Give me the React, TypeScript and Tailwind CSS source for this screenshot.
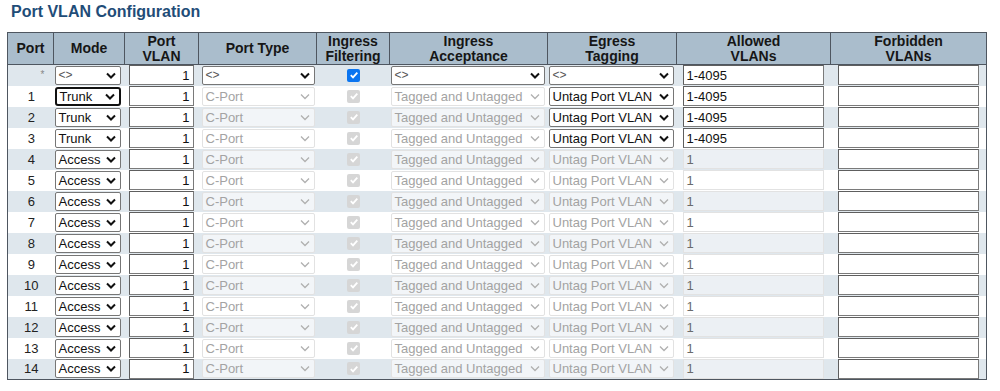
import React from "react";

type Row = {
  port: string;
  mode: string;
  star?: boolean;
};

const rows: Row[] = [
  { port: "*", mode: "<>", star: true },
  ...Array.from({ length: 14 }, (_, i) => ({
    port: String(i + 1),
    mode: i < 3 ? "Trunk" : "Access",
  })),
];

const Chevron = ({ disabled }: { disabled?: boolean }) => (
  <svg width="10" height="7" viewBox="0 0 10 7" className="shrink-0">
    <polyline
      points="1,1.5 5,5.5 9,1.5"
      fill="none"
      stroke={disabled ? "#b0b0b0" : "#111"}
      strokeWidth={disabled ? 1.3 : 2}
    />
  </svg>
);

const Sel = ({
  value,
  width,
  disabled,
  focused,
}: {
  value: string;
  width: string;
  disabled?: boolean;
  focused?: boolean;
}) => (
  <div
    className={`${width} h-[19px] flex items-center justify-between pl-[3px] pr-[4px] rounded-[2px] text-[13px] leading-none ${
      disabled
        ? "border border-[#e2e2e2] bg-white/60 text-[#a3a3a3]"
        : focused
        ? "border-2 border-[#111] rounded-[3px] bg-white text-[#111] pl-[2px] pr-[3px]"
        : "border border-[#767676] bg-white text-[#111]"
    }`}
  >
    <span className={value === "<>" ? "text-[#555] text-[12px]" : ""}>{value}</span>
    <Chevron disabled={disabled} />
  </div>
);

const Field = ({
  value,
  width,
  disabled,
  right,
}: {
  value: string;
  width: string;
  disabled?: boolean;
  right?: boolean;
}) => (
  <div
    className={`${width} h-[20px] flex items-center px-[3px] text-[13px] leading-none ${
      right ? "justify-end" : "justify-start"
    } ${
      disabled
        ? "border border-[#e2e2e2] bg-white/40 text-[#6b6b6b]"
        : "border border-[#7a7a7a] border-t-[#5e5e5e] border-l-[#5e5e5e] bg-white text-[#111]"
    }`}
  >
    {value}
  </div>
);

const Check = ({ disabled }: { disabled?: boolean }) => (
  <div
    className={`w-[13px] h-[13px] rounded-[2px] flex items-center justify-center ${
      disabled ? "bg-[#d6d6d6]" : "bg-[#0b75f0]"
    }`}
  >
    <svg width="10" height="10" viewBox="0 0 10 10">
      <polyline points="1.8,5.2 4,7.4 8.3,2.6" fill="none" stroke="#fff" strokeWidth="1.8" />
    </svg>
  </div>
);

const headers: [string, string?][] = [
  ["Port"],
  ["Mode"],
  ["Port", "VLAN"],
  ["Port Type"],
  ["Ingress", "Filtering"],
  ["Ingress", "Acceptance"],
  ["Egress", "Tagging"],
  ["Allowed", "VLANs"],
  ["Forbidden", "VLANs"],
];

const widths = ["w-[46px]", "w-[71px]", "w-[74px]", "w-[118px]", "w-[73px]", "w-[158px]", "w-[129px]", "w-[154px]", "w-[156px]"];

const App = () => {
  return (
    <main className="w-[1000px] h-[391px] bg-white pt-[3px] pl-[7px] font-['Liberation_Sans',Arial,sans-serif] text-[#111]">
      {/* Title */}
      <h1 className="ml-[4px] text-[16px] leading-[18px] font-bold text-[#1f4d78]">Port VLAN Configuration</h1>

      {/* Table */}
      <table className="mt-[11px] table-fixed border-collapse border border-[#4e5660] w-[980px]">
        <colgroup>
          {widths.map((w, i) => (
            <col key={i} className={w} />
          ))}
        </colgroup>
        <thead>
          <tr className="h-[32px] bg-[#aabdcc]">
            {headers.map(([a, b], i) => (
              <th key={i} className="border border-[#4e5660] p-0 text-[14px] leading-[15px] font-bold text-[#161616] text-center align-middle">
                {a}
                {b && <br />}
                {b}
              </th>
            ))}
          </tr>
        </thead>
        <tbody>
          {rows.map((r, idx) => {
            const n = Number(r.port);
            const egressOn = r.star || n <= 3;
            return (
              <tr key={r.port} className={`h-[21px] ${idx % 2 === 0 ? "bg-[#dfe7ed]" : "bg-white"}`}>
                {/* Port */}
                <td className="p-0 text-[13px] leading-none">
                  {r.star ? (
                    <div className="text-right pr-[9px] text-[#888] text-[10px]">*</div>
                  ) : (
                    <div className="text-center pl-[1px] text-[#222]">{r.port}</div>
                  )}
                </td>
                {/* Mode */}
                <td className="p-0">
                  <div className="pl-[1px] flex items-center">
                    <Sel value={r.mode} width="w-[66px]" focused={r.port === "1"} />
                  </div>
                </td>
                {/* Port VLAN */}
                <td className="p-0">
                  <div className="pl-[4px] flex items-center">
                    <Field value="1" width="w-[65px]" right />
                  </div>
                </td>
                {/* Port Type */}
                <td className="p-0">
                  <div className="pl-[3px] flex items-center">
                    <Sel value={r.star ? "<>" : "C-Port"} width="w-[113px]" disabled={!r.star} />
                  </div>
                </td>
                {/* Ingress Filtering */}
                <td className="p-0">
                  <div className="flex items-center justify-center pl-[1px]">
                    <Check disabled={!r.star} />
                  </div>
                </td>
                {/* Ingress Acceptance */}
                <td className="p-0">
                  <div className="pl-[1px] flex items-center">
                    <Sel value={r.star ? "<>" : "Tagged and Untagged"} width="w-[154px]" disabled={!r.star} />
                  </div>
                </td>
                {/* Egress Tagging */}
                <td className="p-0">
                  <div className="pl-[1px] flex items-center">
                    <Sel value={r.star ? "<>" : "Untag Port VLAN"} width="w-[125px]" disabled={!egressOn} />
                  </div>
                </td>
                {/* Allowed VLANs */}
                <td className="p-0">
                  <div className="pl-[6px] flex items-center">
                    <Field value={egressOn ? "1-4095" : "1"} width="w-[141px]" disabled={!egressOn} />
                  </div>
                </td>
                {/* Forbidden VLANs */}
                <td className="p-0">
                  <div className="pl-[7px] flex items-center">
                    <Field value="" width="w-[141px]" />
                  </div>
                </td>
              </tr>
            );
          })}
        </tbody>
      </table>
    </main>
  );
};

export default App;
